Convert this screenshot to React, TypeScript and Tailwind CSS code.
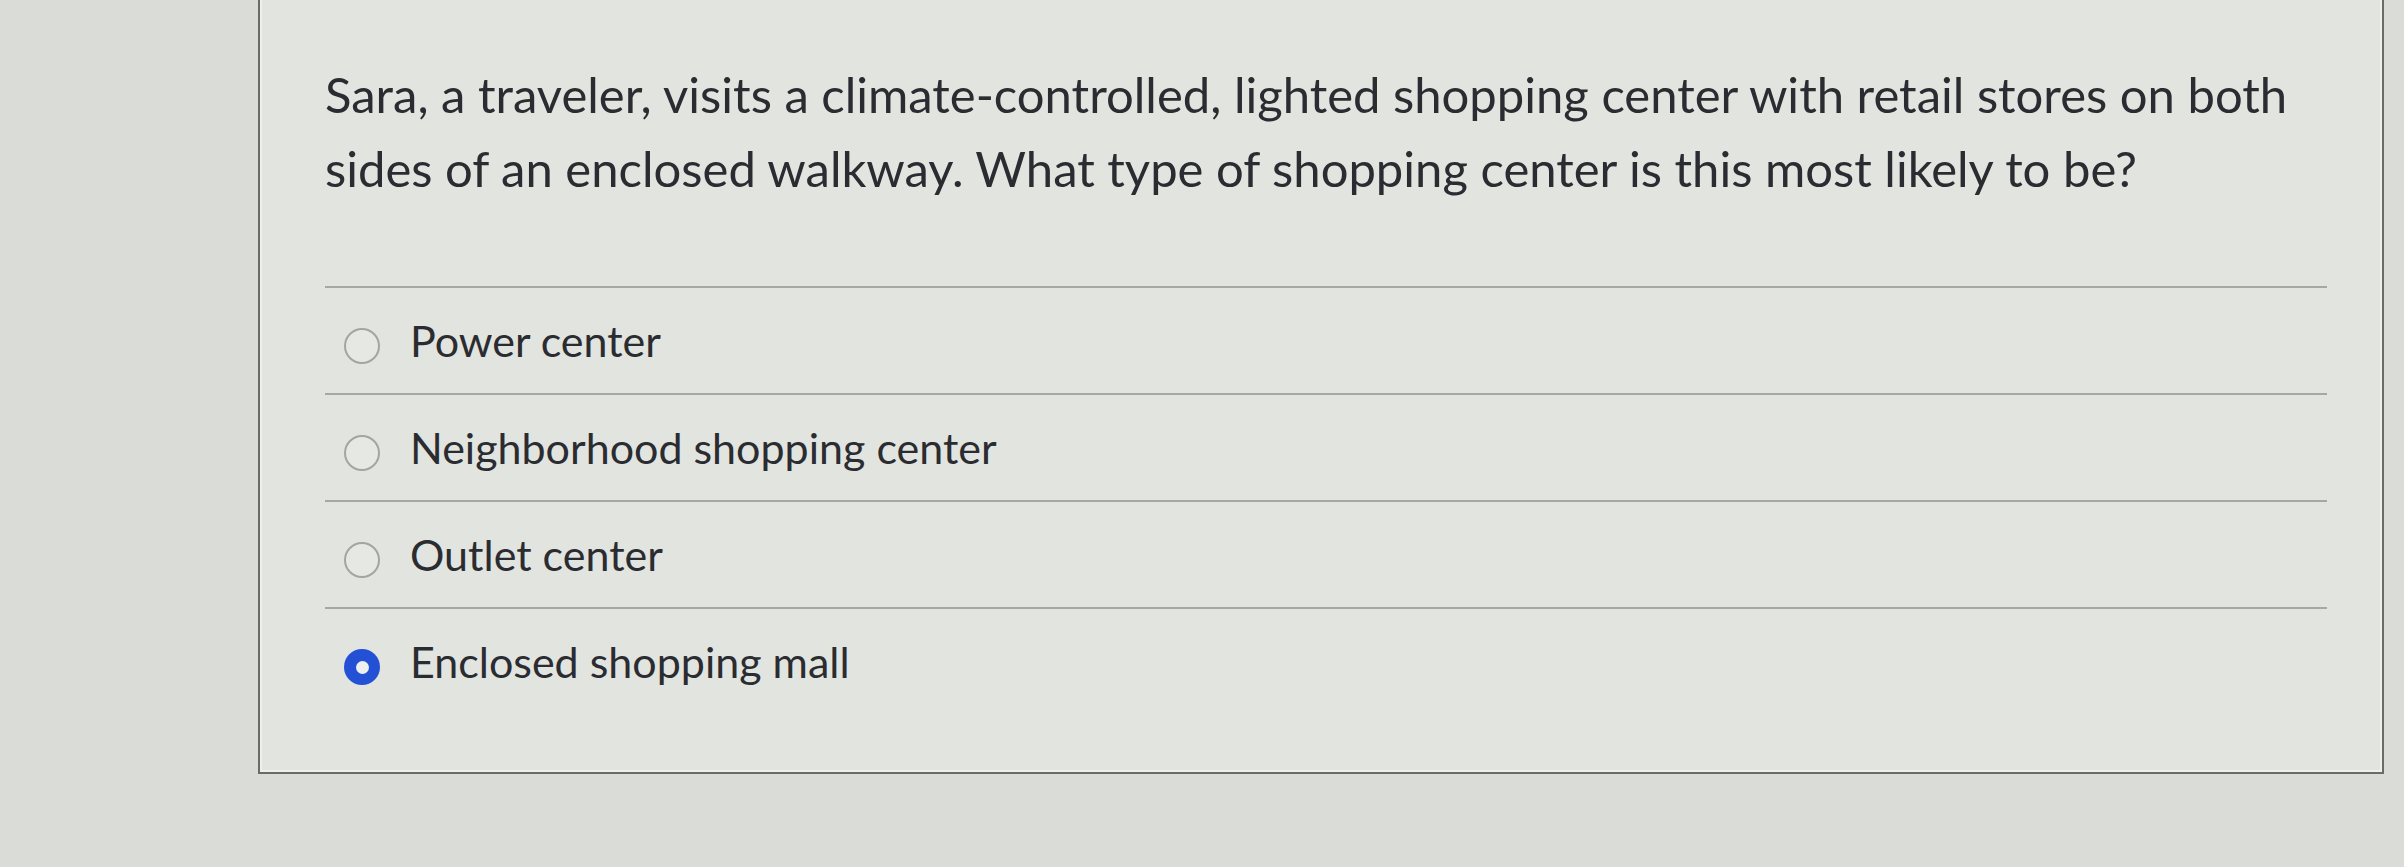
const options = [
  { label: 'Power center', checked: false },
  { label: 'Neighborhood shopping center', checked: false },
  { label: 'Outlet center', checked: false },
  { label: 'Enclosed shopping mall', checked: true },
];

function Radio({ checked }: { checked: boolean }) {
  if (checked) {
    return (
      <span className="mt-[11px] flex h-[36px] w-[36px] shrink-0 items-center justify-center rounded-full bg-[#2450d6]">
        <span className="h-[13px] w-[13px] rounded-full bg-[#eef0f0]" />
      </span>
    );
  }
  return (
    <span className="mt-[11px] h-[36px] w-[36px] shrink-0 rounded-full border-2 border-[#a3a5a4] bg-[#e6e8e4]" />
  );
}

export default function App() {
  return (
    <div className="h-[867px] w-full overflow-hidden bg-[#d9dcd7] font-['Lato',sans-serif] text-[#2b2c31]">
      {/* Question card */}
      <div className="ml-[258px] h-[774px] w-[2126px] border-x-2 border-b-2 border-[#6a6c6a] bg-[#e2e4df] pl-[65px] pt-[57px] shadow-[inset_2px_0_0_#eef0ec,inset_-2px_-2px_0_#eef0ec]">
        <p className="w-[2010px] text-[49px] leading-[74px]">
          Sara, a traveler, visits a climate-controlled, lighted shopping center with retail stores on both sides of an
          enclosed walkway. What type of shopping center is this most likely to be?
        </p>

        <div className="mt-[81px] w-[2002px]">
          {options.map((opt, i) => (
            <div
              key={opt.label}
              className={`flex items-start gap-[30px] border-t-2 border-[#a6a8a5] pl-[19px] pt-[29px] ${
                i === options.length - 1 ? 'pb-[84px]' : 'pb-[28px]'
              }`}
            >
              <Radio checked={opt.checked} />
              <span className="text-[43px] leading-[48px]">{opt.label}</span>
            </div>
          ))}
        </div>
      </div>
    </div>
  );
}
